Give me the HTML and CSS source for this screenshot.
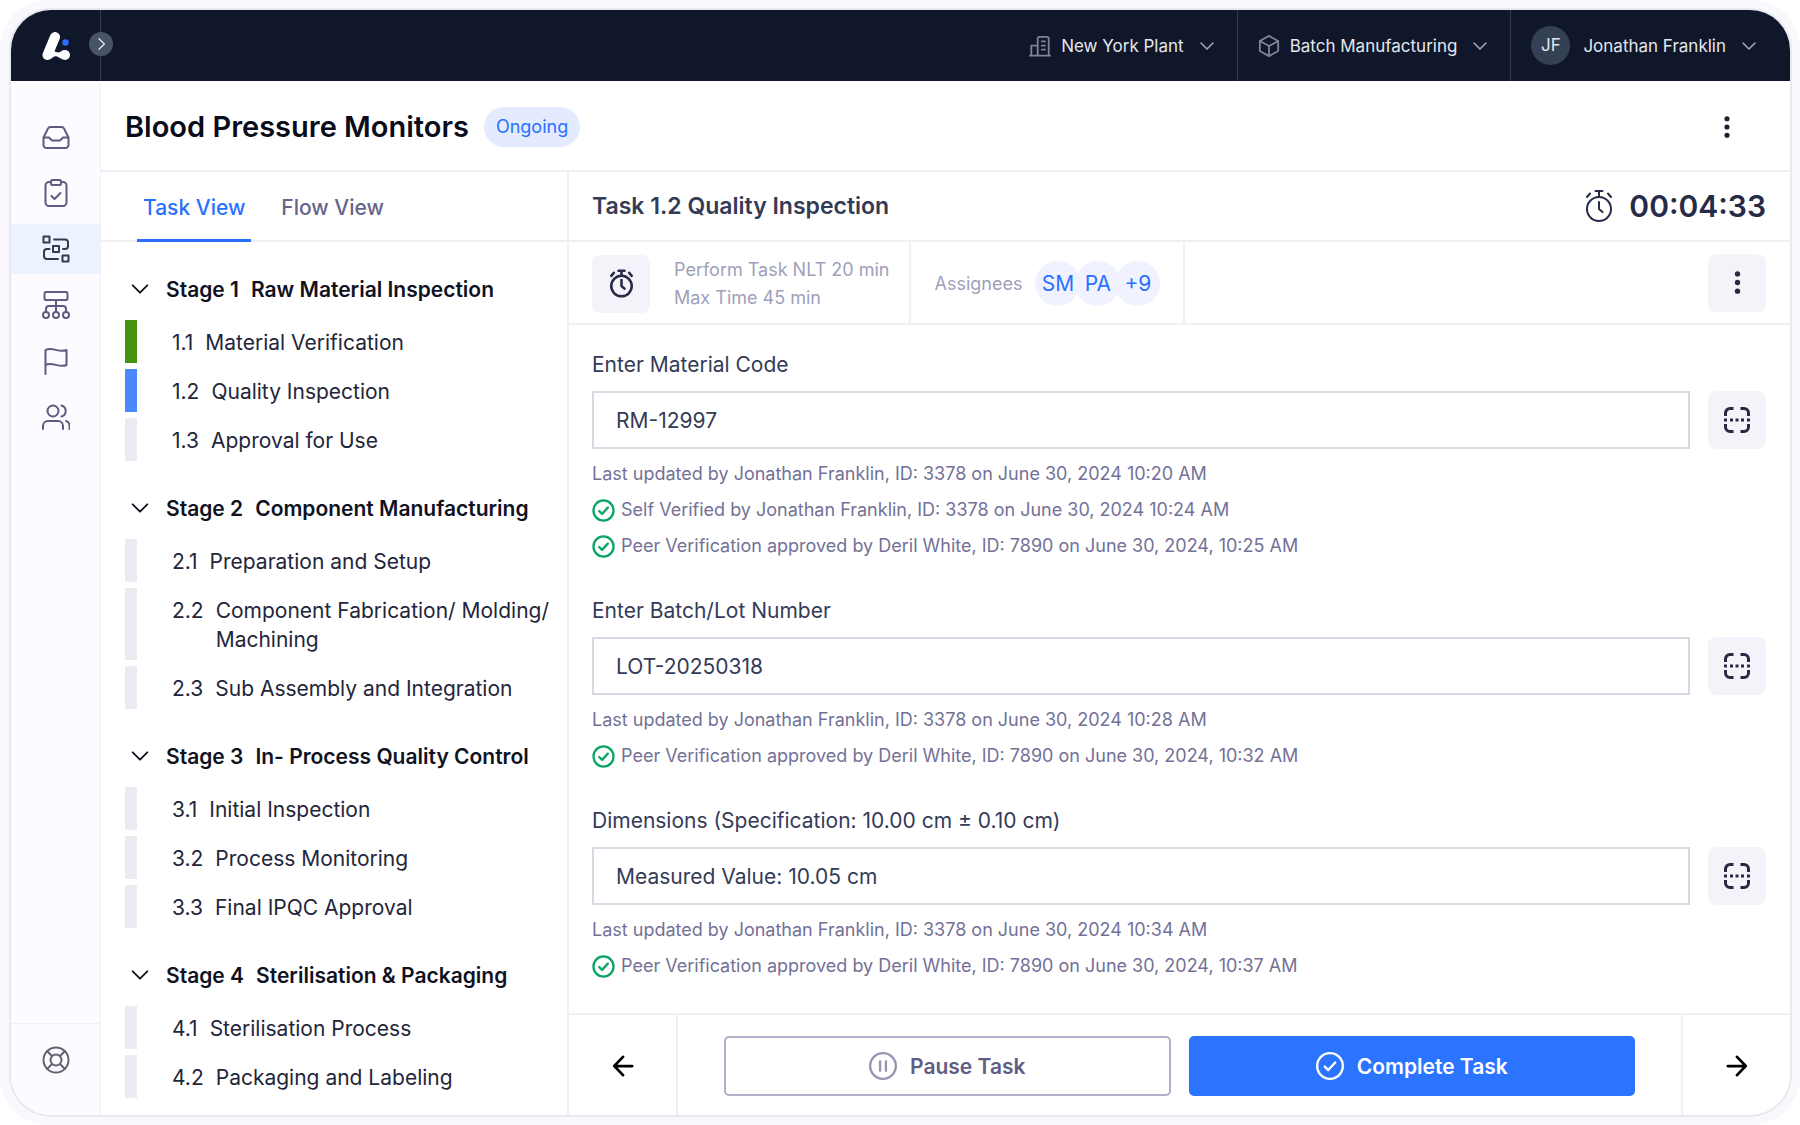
FILE: index.html
```html
<!doctype html>
<html lang="en">
  <head>
    <meta charset="UTF-8" />
    <meta name="viewport" content="width=device-width, initial-scale=1.0" />
    <title>Blood Pressure Monitors</title>
    <link rel="stylesheet" href="styles.css">
  </head>

  <body>
    <!-- shared icons -->
    <svg class="sprite" aria-hidden="true">
      <symbol id="chevron" viewBox="0 0 24 24"><path d="M4 8l8 8 8-8" /></symbol>
      <symbol id="dots" viewBox="0 0 24 24">
        <g fill="currentColor" stroke="none">
          <circle cx="12" cy="3" r="2.800" />
          <circle cx="12" cy="12" r="2.800" />
          <circle cx="12" cy="21" r="2.800" />
        </g>
      </symbol>
      <symbol id="stopwatch" viewBox="0 0 28 34">
        <circle cx="14" cy="20" r="12" />
        <path d="M14 13v7l3.500 3M10.500 2h7M14 2v5M2 8l3-3.500M26 8l-3-3.500" />
      </symbol>
      <symbol id="scan" viewBox="0 0 26 26">
        <path d="M1.500 9V6a4.500 4.500 0 0 1 4.500-4.500h3.500M16.500 1.500H20A4.500 4.500 0 0 1 24.500 6v3M24.500 17v3a4.500 4.500 0 0 1-4.500 4.500h-3.500M9.500 24.500H6A4.500 4.500 0 0 1 1.500 20v-3" />
        <path d="M0 13h3M6 13h3M11.500 13h3M17 13h3M23 13h3" />
      </symbol>
      <symbol id="check" viewBox="0 0 24 24">
        <g stroke-width="2.400">
          <circle cx="12" cy="12" r="10.500" />
          <path d="M7.500 12.500l3 3 6-6.500" />
        </g>
      </symbol>
    </svg>

    <div class="app">
      <header class="topbar">
        <div class="brand">
          <svg class="logo" viewBox="0 0 28 28">
            <path d="M13 5L5.500 23" stroke="#fff" stroke-width="10" />
            <path d="M7 27.500c4-1.500 5-4 8-3l6 3v-9.500c-3 3-6 3-9 1z" fill="#fff" />
            <circle cx="23" cy="23" r="5" fill="#fff" />
            <circle cx="23.500" cy="10.500" r="3.200" fill="#2970ff" />
          </svg>
          <button class="expand" aria-label="Expand menu">
            <svg viewBox="0 0 24 24"><path d="M9 4l8 8-8 8" /></svg>
          </button>
        </div>
        <button class="switcher">
          <svg class="switcher-icon" viewBox="0 0 24 24">
            <path d="M1 22.500h22M2.500 22V11.500h7M9.500 22V4a2 2 0 0 1 2-2h8a2 2 0 0 1 2 2v18M14 7h3.500M14 11.500h3.500M14 16h3.500" />
          </svg>
          New York Plant
          <svg class="caret"><use href="#chevron" /></svg>
        </button>
        <button class="switcher">
          <svg class="switcher-icon" viewBox="0 0 24 24">
            <path d="M12 1l10 5.500v11L12 23 2 17.500v-11zM2 6.500L12 12l10-5.500M12 12v11" />
          </svg>
          Batch Manufacturing
          <svg class="caret"><use href="#chevron" /></svg>
        </button>
        <button class="switcher user">
          <span class="avatar">JF</span>
          Jonathan Franklin
          <svg class="caret"><use href="#chevron" /></svg>
        </button>
      </header>

      <nav class="rail">
        <a href="#" aria-label="Inbox">
          <svg viewBox="0 0 28 28"><path d="M1.500 14.500L6 5.500a3 3 0 0 1 2.500-1.500h11A3 3 0 0 1 22 5.500l4.500 9V22a3 3 0 0 1-3 3h-19a3 3 0 0 1-3-3zM1.500 14.500h5.500l3 3h8l3-3h5.500" /></svg>
        </a>
        <a href="#" aria-label="Jobs">
          <svg viewBox="0 0 28 28"><rect x="3.500" y="3" width="21" height="24" rx="3.500" /><rect x="9" y="1" width="10" height="5" rx="1.500" fill="#fcfbff" /><path d="M9.500 17l3 3 6-6" /></svg>
        </a>
        <a href="#" class="active" aria-label="Processes">
          <svg viewBox="0 0 28 28"><rect x="1.500" y="1.500" width="6" height="6" /><rect x="11" y="11" width="6" height="6" /><rect x="20.500" y="20.500" width="6" height="6" /><path d="M12 4.500H23a3 3 0 0 1 3 3V11a3 3 0 0 1-3 3h-2M7.500 14H5a3 3 0 0 0-3 3v4a3 3 0 0 0 3 3h11" /></svg>
        </a>
        <a href="#" aria-label="Hierarchy">
          <svg viewBox="0 0 28 28"><rect x="2.500" y="1" width="23" height="8" rx="1.500" /><circle cx="4" cy="24" r="3" /><circle cx="14" cy="24" r="3" /><circle cx="24" cy="24" r="3" /><path d="M14 9v12M4 21v-3a3 3 0 0 1 3-3h14a3 3 0 0 1 3 3v3" /></svg>
        </a>
        <a href="#" aria-label="Issues">
          <svg viewBox="0 0 28 28"><path d="M3.500 27V3c7-4 13 3.500 21 0v15c-8 3.500-14-4-21 0" /></svg>
        </a>
        <a href="#" aria-label="Users">
          <svg viewBox="0 0 28 28"><circle cx="11" cy="8" r="5.500" /><path d="M1 26v-3a5 5 0 0 1 5-5h10a5 5 0 0 1 5 5v3M19.500 2.500a5.700 5.700 0 0 1 0 11M24 18a5 5 0 0 1 3.500 5v3" /></svg>
        </a>
        <a href="#" class="help" aria-label="Help">
          <svg viewBox="0 0 28 28"><circle cx="14" cy="14" r="12.500" /><circle cx="14" cy="14" r="5.500" /><path d="M5 5l5 5M23 5l-5 5M5 23l5-5M23 23l-5-5" /></svg>
        </a>
      </nav>

      <div class="page-head">
        <h1>Blood Pressure Monitors</h1>
        <span class="badge">Ongoing</span>
        <button class="more" aria-label="More"><svg><use href="#dots" /></svg></button>
      </div>

      <aside class="stages">
        <div class="tabs">
          <button class="tab current">Task View</button>
          <button class="tab">Flow View</button>
        </div>

        <section class="stage">
          <h2><svg><use href="#chevron" /></svg><span>Stage 1</span>Raw Material Inspection</h2>
          <ul>
            <li class="done"><span>1.1</span>Material Verification</li>
            <li class="doing"><span>1.2</span>Quality Inspection</li>
            <li><span>1.3</span>Approval for Use</li>
          </ul>
        </section>
        <section class="stage">
          <h2><svg><use href="#chevron" /></svg><span>Stage 2</span>Component Manufacturing</h2>
          <ul>
            <li><span>2.1</span>Preparation and Setup</li>
            <li><span>2.2</span>Component Fabrication/ Molding/ Machining</li>
            <li><span>2.3</span>Sub Assembly and Integration</li>
          </ul>
        </section>
        <section class="stage">
          <h2><svg><use href="#chevron" /></svg><span>Stage 3</span>In- Process Quality Control</h2>
          <ul>
            <li><span>3.1</span>Initial Inspection</li>
            <li><span>3.2</span>Process Monitoring</li>
            <li><span>3.3</span>Final IPQC Approval</li>
          </ul>
        </section>
        <section class="stage">
          <h2><svg><use href="#chevron" /></svg><span>Stage 4</span>Sterilisation &amp; Packaging</h2>
          <ul>
            <li><span>4.1</span>Sterilisation Process</li>
            <li><span>4.2</span>Packaging and Labeling</li>
          </ul>
        </section>
      </aside>

      <main class="task">
        <div class="task-head">
          <h2>Task 1.2 Quality Inspection</h2>
          <div class="timer">
            <svg><use href="#stopwatch" /></svg>
            <span>00:04:33</span>
          </div>
        </div>

        <div class="task-meta">
          <div class="limits">
            <span class="tile"><svg class="watch"><use href="#stopwatch" /></svg></span>
            <p>Perform Task NLT 20 min<br>Max Time 45 min</p>
          </div>
          <div class="assignees">
            Assignees
            <div class="people">
              <span>SM</span>
              <span>PA</span>
              <span>+9</span>
            </div>
          </div>
          <button class="tile" aria-label="Task options"><svg class="options"><use href="#dots" /></svg></button>
        </div>

        <form class="fields">
          <div class="field">
            <label for="material">Enter Material Code</label>
            <div class="entry">
              <input id="material" type="text" value="RM-12997">
              <button type="button" class="tile" aria-label="Scan"><svg class="scan"><use href="#scan" /></svg></button>
            </div>
            <p>Last updated by Jonathan Franklin, ID: 3378 on June 30, 2024 10:20 AM</p>
            <p><svg><use href="#check" /></svg>Self Verified by Jonathan Franklin, ID: 3378 on June 30, 2024 10:24 AM</p>
            <p><svg><use href="#check" /></svg>Peer Verification approved by Deril White, ID: 7890 on June 30, 2024, 10:25 AM</p>
          </div>
          <div class="field">
            <label for="lot">Enter Batch/Lot Number</label>
            <div class="entry">
              <input id="lot" type="text" value="LOT-20250318">
              <button type="button" class="tile" aria-label="Scan"><svg class="scan"><use href="#scan" /></svg></button>
            </div>
            <p>Last updated by Jonathan Franklin, ID: 3378 on June 30, 2024 10:28 AM</p>
            <p><svg><use href="#check" /></svg>Peer Verification approved by Deril White, ID: 7890 on June 30, 2024, 10:32 AM</p>
          </div>
          <div class="field">
            <label for="dimensions">Dimensions (Specification: 10.00 cm ± 0.10 cm)</label>
            <div class="entry">
              <input id="dimensions" type="text" value="Measured Value: 10.05 cm">
              <button type="button" class="tile" aria-label="Scan"><svg class="scan"><use href="#scan" /></svg></button>
            </div>
            <p>Last updated by Jonathan Franklin, ID: 3378 on June 30, 2024 10:34 AM</p>
            <p><svg><use href="#check" /></svg>Peer Verification approved by Deril White, ID: 7890 on June 30, 2024, 10:37 AM</p>
          </div>
        </form>

        <footer class="actions">
          <button class="step" aria-label="Previous task">
            <svg viewBox="0 0 24 24"><path d="M22 12H3M12 2L2.500 12l9.500 10" /></svg>
          </button>
          <div class="buttons">
            <button class="pause">
              <svg viewBox="0 0 24 24"><circle cx="12" cy="12" r="11" /><path d="M9.500 8v8M14.500 8v8" /></svg>
              Pause Task
            </button>
            <button class="complete">
              <svg viewBox="0 0 24 24"><circle cx="12" cy="12" r="11" /><path d="M7.500 12.500l3 3 6-6.500" /></svg>
              Complete Task
            </button>
          </div>
          <button class="step" aria-label="Next task">
            <svg viewBox="0 0 24 24"><path d="M2 12h19M12 2l9.500 10-9.500 10" /></svg>
          </button>
        </footer>
      </main>
    </div>
  </body>
</html>
```
FILE: styles.css
```css
* {
  box-sizing: border-box;
}

html {
  background-color: #fff;
}
body {
  margin: 0;
  height: 100vh;
  padding: 10px 10px 10px 11px;
  background-color: #f9f8fd;
  border-radius: 48px;
  font-family: Inter, "Liberation Sans", sans-serif;
  color: #1d2136;
}

h1,
h2,
p,
ul {
  margin: 0;
  padding: 0;
}
ul {
  list-style: none;
}
button {
  padding: 0;
  border: 0;
  background: none;
  font: inherit;
  color: inherit;
  cursor: pointer;
}
svg {
  flex: none;
  fill: none;
  stroke: currentColor;
  stroke-width: 2;
  stroke-linecap: round;
  stroke-linejoin: round;
}
.sprite {
  position: absolute;
  width: 0;
  height: 0;
}

.app {
  height: 100%;
  display: grid;
  grid-template-columns: 89px 467px 1fr;
  grid-template-rows: 71px 91px minmax(0, 1fr);
  background-color: #fff;
  border-radius: 40px;
  box-shadow: 0 0 0 2px #e9e8ef;
  overflow: hidden;
}

/* top bar */
.topbar {
  grid-column: 1 / -1;
  display: flex;
  background-color: #10172a;
  color: #e4e7ee;
  font-size: 17px;
}
.brand {
  position: relative;
  width: 90px;
  margin-right: auto;
  padding: 22px 0 0 31px;
  border-right: 1px solid #333a4d;
}
.logo {
  width: 28px;
  height: 28px;
  stroke: none;
}
.expand {
  position: absolute;
  top: 22px;
  right: -13px;
  width: 24px;
  height: 24px;
  border-radius: 50%;
  background-color: #475467;
  display: flex;
  justify-content: center;
  align-items: center;
}
.expand svg {
  width: 16px;
  height: 16px;
}
.switcher {
  display: flex;
  align-items: center;
  gap: 10px;
  padding: 0 21px 0 20px;
  border-right: 1px solid #333a4d;
}
.switcher-icon {
  width: 22px;
  height: 22px;
  color: #7d8496;
}
.caret {
  width: 18px;
  height: 18px;
  margin-left: 4px;
  color: #a3a9b8;
}
.user {
  border-right: 0;
  padding-right: 32px;
}
.avatar {
  width: 39px;
  height: 39px;
  margin-right: 3px;
  border-radius: 50%;
  background-color: #344054;
  line-height: 39px;
}

/* icon rail */
.rail {
  grid-row: 2 / -1;
  display: flex;
  flex-direction: column;
  gap: 6px;
  padding-top: 31px;
  background-color: #fcfbff;
}
.rail a {
  height: 50px;
  display: flex;
  justify-content: center;
  align-items: center;
  color: #5d5b80;
}
.rail svg {
  width: 28px;
  height: 28px;
}
.rail .active {
  background-color: #edf2ff;
  color: #343b50;
}
.rail .help {
  height: 92px;
  margin-top: auto;
  padding-bottom: 20px;
  border-top: 1px solid #f0eff5;
  color: #62656f;
}

.page-head {
  grid-column: 2 / -1;
  display: flex;
  align-items: center;
  padding: 2px 52px 0 24px;
  border-left: 1px solid #f0eff5;
  border-bottom: 2px solid #f0eff5;
}
.page-head h1 {
  font-size: 29px;
  font-weight: 600;
  color: #0a0c1a;
}
.badge {
  margin-left: 15px;
  padding: 0 12px;
  border-radius: 20px;
  background-color: #e5ebff;
  color: #2970ff;
  font-size: 18px;
  line-height: 40px;
}
.more {
  margin-left: auto;
}
.more svg {
  display: block;
  width: 22px;
  height: 22px;
}

/* stages */
.stages {
  padding: 0 14px 0 24px;
  border-left: 1px solid #f0eff5;
  overflow: hidden;
}
.tabs {
  display: flex;
  gap: 24px;
  height: 70px;
  margin: 0 -14px 16px -24px;
  padding-left: 36px;
  border-bottom: 2px solid #f0eff5;
}
.tab {
  height: 70px;
  padding: 4px 6px 0;
  border-bottom: 3px solid transparent;
  font-size: 21px;
  font-weight: 500;
  color: #66648a;
}
.tab.current {
  border-color: #2970ff;
  color: #2970ff;
}
.stage {
  margin-bottom: 16px;
}
.stage h2 {
  display: flex;
  align-items: center;
  height: 62px;
  font-size: 21px;
  font-weight: 600;
  color: #10121f;
}
.stage h2 svg {
  width: 22px;
  height: 22px;
  margin: 0 15px 0 4px;
}
.stage h2 span {
  margin-right: 12px;
}
.stage li {
  display: flex;
  margin-bottom: 6px;
  padding: 8px 0 6px 35px;
  border-left: 12px solid #edebf2;
  font-size: 21px;
  line-height: 29px;
  color: #23263a;
}
.stage li span {
  margin-right: 12px;
}
.stage li.done {
  border-color: #46920f;
}
.stage li.doing {
  border-color: #4b87ff;
}

/* task */
.task {
  min-width: 0;
  display: flex;
  flex-direction: column;
  border-left: 2px solid #f0eff5;
}
.task-head {
  display: flex;
  flex: none;
  justify-content: space-between;
  align-items: center;
  height: 70px;
  padding: 0 24px 0 23px;
  border-bottom: 2px solid #f0eff5;
}
.task-head h2 {
  font-size: 23px;
  font-weight: 600;
  color: #343b57;
}
.timer {
  display: flex;
  align-items: center;
  gap: 15px;
  font-size: 30px;
  font-weight: 600;
  color: #262b48;
}
.timer svg {
  width: 30px;
  height: 34px;
}
.task-meta {
  display: flex;
  flex: none;
  align-items: center;
  height: 83px;
  padding: 0 24px 0 23px;
  border-bottom: 2px solid #f0eff5;
}
.tile {
  flex: none;
  width: 58px;
  height: 58px;
  border-radius: 8px;
  background-color: #f5f3fa;
  color: #262a44;
  display: flex;
  justify-content: center;
  align-items: center;
}
.tile .watch {
  width: 25px;
  height: 29px;
  stroke-width: 3;
}
.tile .options {
  width: 23px;
  height: 23px;
}
.tile .scan {
  width: 26px;
  height: 26px;
  stroke-linecap: butt;
  stroke-width: 3;
}
.task-meta .tile:last-child {
  margin-left: auto;
}
.limits,
.assignees {
  display: flex;
  align-items: center;
  height: 100%;
  padding-top: 2px;
  border-right: 2px solid #f0eff5;
  color: #a09fba;
  font-size: 18px;
}
.limits {
  gap: 24px;
  padding-right: 20px;
}
.limits p {
  line-height: 28px;
}
.assignees {
  gap: 13px;
  padding-left: 23px;
  padding-right: 23px;
}
.people {
  display: flex;
}
.people span {
  width: 45px;
  margin-right: -5px;
  border-radius: 50%;
  background-color: #f0f3ff;
  color: #2970ff;
  font-size: 21px;
  line-height: 45px;
  text-align: center;
}
.people span:last-child {
  margin-right: 0;
}

.fields {
  flex: 1;
  padding: 26px 24px 0 23px;
}
.field + .field {
  margin-top: 33px;
}
.field label {
  display: block;
  margin-bottom: 12px;
  font-size: 21px;
  line-height: 28px;
  color: #343b57;
}
.entry {
  display: flex;
  gap: 18px;
  margin-bottom: 7px;
}
.entry input {
  flex: 1;
  min-width: 0;
  height: 58px;
  padding: 0 22px;
  border: 2px solid #d8d8e3;
  background-color: #fff;
  font: inherit;
  font-size: 21px;
  color: #343b57;
}
.field p {
  display: flex;
  align-items: center;
  gap: 6px;
  font-size: 18px;
  line-height: 36px;
  color: #737197;
}
.field p svg {
  width: 23px;
  height: 23px;
  color: #0ba566;
}

.actions {
  display: flex;
  flex: none;
  height: 102px;
  border-top: 2px solid #f0eff5;
}
.step {
  width: 107px;
  padding-top: 6px;
  color: #000;
}
.step svg {
  width: 22px;
  height: 22px;
  stroke-width: 3;
}
.buttons {
  flex: 1;
  display: flex;
  align-items: center;
  gap: 18px;
  padding: 2px 46px 0;
  border: solid #f0eff5;
  border-width: 0 2px;
}
.pause,
.complete {
  flex: 1;
  height: 60px;
  border: 2px solid #2b74ff;
  border-radius: 5px;
  display: flex;
  justify-content: center;
  align-items: center;
  gap: 13px;
  font-size: 21px;
  font-weight: 600;
}
.buttons svg {
  width: 28px;
  height: 28px;
}
.pause {
  border-color: #b0afc8;
  color: #5f5d83;
}
.pause svg {
  color: #9795b4;
}
.complete {
  background-color: #2b74ff;
  color: #fff;
}
```
